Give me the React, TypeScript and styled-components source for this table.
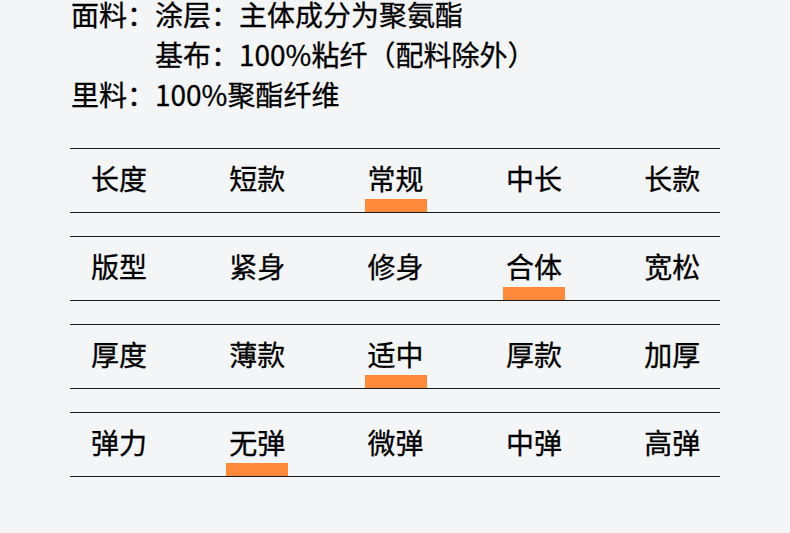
import React from "react";
import styled, { createGlobalStyle } from "styled-components";

const GlobalStyle = createGlobalStyle`
  html, body {
    margin: 0;
    padding: 0;
    background: #f4f5f7;
  }
  body {
    font-family: "Noto Sans CJK SC", "Noto Sans", sans-serif;
    color: #000;
  }
`;

const Page = styled.div`
  width: 790px;
  height: 533px;
  overflow: hidden;
  background: #f4f5f7;
`;

const Info = styled.div`
  margin-top: -6px;
  padding-left: 71px;
  font-size: 28px;
  line-height: 40px;
  -webkit-text-stroke: 0.3px #000;
`;

const InfoLine = styled.div<{ $indent?: boolean }>`
  padding-left: ${(p) => (p.$indent ? "3em" : "0")};
  white-space: nowrap;
`;

const Table = styled.div`
  margin: 34px 0 0 70px;
  width: 650px;
  display: flex;
  flex-direction: column;
  gap: 23px;
`;

const Row = styled.div`
  height: 63px;
  border-top: 1px solid #1a1a1a;
  border-bottom: 1px solid #1a1a1a;
  display: grid;
  grid-template-columns: repeat(4, 138.3px) 1fr;
  padding-left: 18px;
`;

const Cell = styled.div`
  display: flex;
  align-items: stretch;
`;

const Label = styled.span<{ $active?: boolean }>`
  position: relative;
  display: inline-flex;
  align-items: center;
  padding: 0 3px 5px;
  font-size: 28px;
  line-height: 1;
  -webkit-text-stroke: 0.3px #000;
  &::after {
    content: "";
    display: ${(p) => (p.$active ? "block" : "none")};
    position: absolute;
    left: 0;
    right: 0;
    bottom: 0;
    height: 13px;
    background: #ff893b;
  }
`;

const rows = [
  { items: ["长度", "短款", "常规", "中长", "长款"], active: 2 },
  { items: ["版型", "紧身", "修身", "合体", "宽松"], active: 3 },
  { items: ["厚度", "薄款", "适中", "厚款", "加厚"], active: 2 },
  { items: ["弹力", "无弹", "微弹", "中弹", "高弹"], active: 1 },
];

export default function App() {
  return (
    <Page>
      <GlobalStyle />
      <Info>
        <InfoLine>面料：涂层：主体成分为聚氨酯</InfoLine>
        <InfoLine $indent>基布：100%粘纤（配料除外）</InfoLine>
        <InfoLine>里料：100%聚酯纤维</InfoLine>
      </Info>
      <Table>
        {rows.map((row) => (
          <Row key={row.items[0]}>
            {row.items.map((item, i) => (
              <Cell key={item}>
                <Label $active={i === row.active}>{item}</Label>
              </Cell>
            ))}
          </Row>
        ))}
      </Table>
    </Page>
  );
}
